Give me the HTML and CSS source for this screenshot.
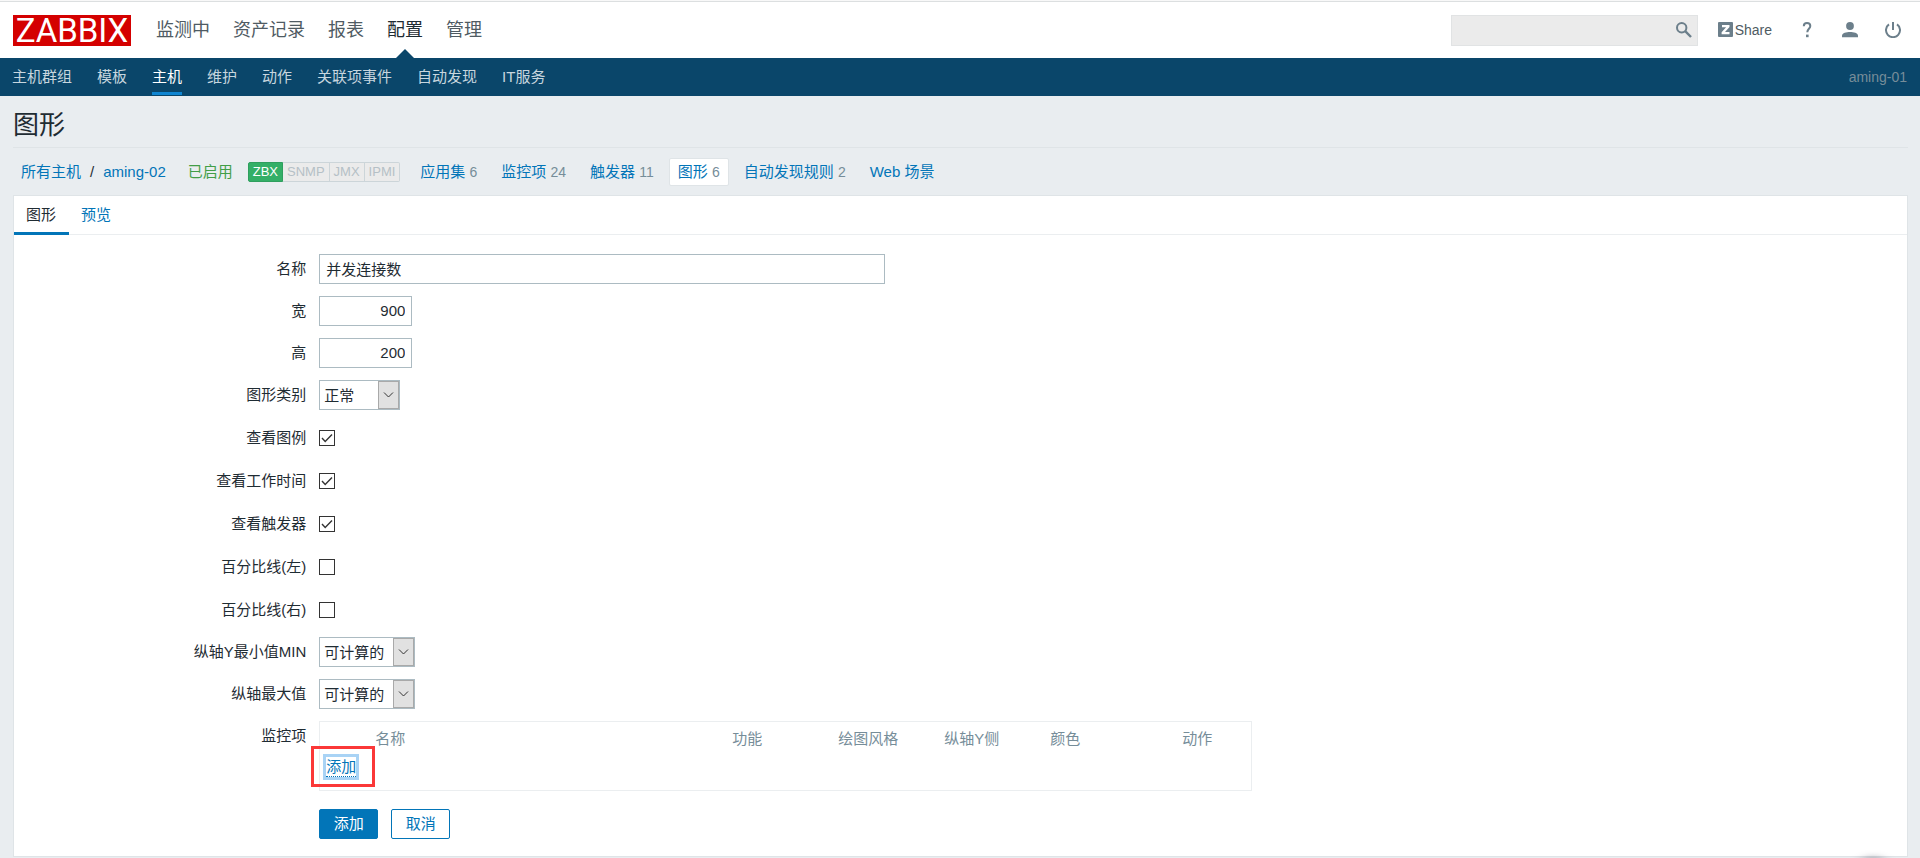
FILE: index.html
```html
<!DOCTYPE html>
<html lang="zh-CN">
<head>
<meta charset="utf-8">
<title>图形</title>
<link rel="stylesheet" href="styles.css">
</head>
<body>
<header class="header">
  <a class="logo" href="#">ZABBIX</a>
  <nav class="main-nav">
    <a href="#">监测中</a>
    <a href="#">资产记录</a>
    <a href="#">报表</a>
    <a href="#" class="selected">配置</a>
    <a href="#">管理</a>
  </nav>
  <form class="search">
    <input type="text" aria-label="搜索">
    <button type="button" aria-label="搜索">
      <svg width="16" height="16" viewBox="0 0 16 16"><circle cx="5.7" cy="5.7" r="4.7" fill="none" stroke="currentColor" stroke-width="2"/><path d="M9.2 9.2L15 15" stroke="currentColor" stroke-width="2.4"/></svg>
    </button>
  </form>
  <a class="share" href="#">
    <svg width="15" height="15" viewBox="0 0 15 15"><rect width="15" height="15" rx="1" fill="#6c7f8b"/><path d="M4 3h7.5v2L7 10h4.5v2.3H3.6v-2L8.1 5.3H4z" fill="#fff"/></svg>
    <span>Share</span>
  </a>
  <a class="icon-link" href="#" aria-label="帮助">
    <svg width="16" height="16" viewBox="0 0 16 16"><path d="M4.8 4.2C4.8 2 6.2 1 8 1s3.3 1 3.3 3c0 2.6-3 3-3 6.2" fill="none" stroke="currentColor" stroke-width="2"/><rect x="7" y="12.6" width="2.6" height="2.6" fill="currentColor"/></svg>
  </a>
  <a class="icon-link" href="#" aria-label="用户">
    <svg width="16" height="16" viewBox="0 0 16 16"><circle cx="8" cy="4" r="3.9" fill="currentColor"/><path d="M0 15.2v-1.7C0 11 4.5 10 8 10s8 1 8 3.5v1.7z" fill="currentColor"/></svg>
  </a>
  <a class="icon-link" href="#" aria-label="退出">
    <svg width="16" height="16" viewBox="0 0 16 16"><path d="M4 2.4a7 7 0 1 0 8 0M8 0v8" fill="none" stroke="currentColor" stroke-width="2"/></svg>
  </a>
</header>
<nav class="sub-nav">
  <a href="#">主机群组</a>
  <a href="#">模板</a>
  <a href="#" class="selected">主机</a>
  <a href="#">维护</a>
  <a href="#">动作</a>
  <a href="#">关联项事件</a>
  <a href="#">自动发现</a>
  <a href="#">IT服务</a>
  <span class="server">aming-01</span>
</nav>
<main class="page">
  <h1 class="title">图形</h1>
  <div class="host-bar">
    <div class="path"><a href="#">所有主机</a><span>/</span><a href="#">aming-02</a></div>
    <a class="enabled" href="#">已启用</a>
    <div class="badges">
      <span class="badge on">ZBX</span><span class="badge">SNMP</span><span class="badge">JMX</span><span class="badge">IPMI</span>
    </div>
    <nav class="host-links">
      <a href="#">应用集 <sup>6</sup></a>
      <a href="#">监控项 <sup>24</sup></a>
      <a href="#">触发器 <sup>11</sup></a>
      <a href="#" class="selected">图形 <sup>6</sup></a>
      <a href="#">自动发现规则 <sup>2</sup></a>
      <a href="#">Web 场景</a>
    </nav>
  </div>
  <section class="panel">
    <nav class="tabs">
      <a href="#" class="selected">图形</a>
      <a href="#">预览</a>
    </nav>
    <form class="form">
      <label for="name">名称</label>
      <div class="field"><input class="text wide" id="name" type="text" value="并发连接数"></div>
      <label for="width">宽</label>
      <div class="field"><input class="text number" id="width" type="text" value="900"></div>
      <label for="height">高</label>
      <div class="field"><input class="text number" id="height" type="text" value="200"></div>
      <label for="type">图形类别</label>
      <div class="field"><span class="select short"><select id="type"><option>正常</option></select><svg viewBox="0 0 21 28"><rect x=".5" y=".5" width="20" height="27" fill="#e1e1e1" stroke="#a9a9a9"/><path d="M6 11.5l4.5 4.5 4.5-4.5" fill="none" stroke="#333"/></svg></span></div>
      <label for="legend">查看图例</label>
      <div class="field tick"><span class="check"><input id="legend" type="checkbox" checked><svg viewBox="0 0 16 16"><path d="M3 8l3.2 3.5L13 4.5"/></svg></span></div>
      <label for="worktime">查看工作时间</label>
      <div class="field tick"><span class="check"><input id="worktime" type="checkbox" checked><svg viewBox="0 0 16 16"><path d="M3 8l3.2 3.5L13 4.5"/></svg></span></div>
      <label for="triggers">查看触发器</label>
      <div class="field tick"><span class="check"><input id="triggers" type="checkbox" checked><svg viewBox="0 0 16 16"><path d="M3 8l3.2 3.5L13 4.5"/></svg></span></div>
      <label for="left">百分比线(左)</label>
      <div class="field tick"><span class="check"><input id="left" type="checkbox"><svg viewBox="0 0 16 16"><path d="M3 8l3.2 3.5L13 4.5"/></svg></span></div>
      <label for="right">百分比线(右)</label>
      <div class="field tick"><span class="check"><input id="right" type="checkbox"><svg viewBox="0 0 16 16"><path d="M3 8l3.2 3.5L13 4.5"/></svg></span></div>
      <label for="ymin">纵轴Y最小值MIN</label>
      <div class="field"><span class="select"><select id="ymin"><option>可计算的</option></select><svg viewBox="0 0 21 28"><rect x=".5" y=".5" width="20" height="27" fill="#e1e1e1" stroke="#a9a9a9"/><path d="M6 11.5l4.5 4.5 4.5-4.5" fill="none" stroke="#333"/></svg></span></div>
      <label for="ymax">纵轴最大值</label>
      <div class="field"><span class="select"><select id="ymax"><option>可计算的</option></select><svg viewBox="0 0 21 28"><rect x=".5" y=".5" width="20" height="27" fill="#e1e1e1" stroke="#a9a9a9"/><path d="M6 11.5l4.5 4.5 4.5-4.5" fill="none" stroke="#333"/></svg></span></div>
      <span class="label">监控项</span>
      <div class="items">
        <table>
          <thead>
            <tr><th class="c-handle"></th><th class="c-name">名称</th><th class="c-mid">功能</th><th class="c-mid">绘图风格</th><th class="c-mid">纵轴Y侧</th><th class="c-color">颜色</th><th>动作</th></tr>
          </thead>
          <tbody>
            <tr><td colspan="7"><span class="marked"><a class="add" href="#">添加</a></span></td></tr>
          </tbody>
        </table>
      </div>
      <div class="actions">
        <button class="btn primary" type="button">添加</button>
        <button class="btn" type="button">取消</button>
      </div>
    </form>
  </section>
</main>
<div class="floating"></div>
</body>
</html>
```
FILE: styles.css
```css
* { box-sizing: border-box; }
body {
  margin: 0;
  background: #e9edf0;
  color: #1f2c33;
  font: 15px/20px "Liberation Sans", "Noto Sans CJK SC", sans-serif;
}
a { color: #0275b8; text-decoration: none; }

.header {
  display: flex;
  align-items: center;
  height: 58px;
  padding: 3px 19px 0 13px;
  background: #fff;
  box-shadow: inset 0 1px #f8f8f8, inset 0 2px #dcdfe0;
}
.logo {
  width: 118px;
  height: 31px;
  background: #d40000;
  color: #fff;
  font: 33px/31px Roboto, sans-serif;
  text-align: center;
}
.main-nav { display: flex; align-self: stretch; gap: 23px; margin-left: 25px; }
.main-nav a {
  display: flex;
  align-items: center;
  position: relative;
  padding-bottom: 2px;
  color: #4f5b63;
  font-size: 18px;
}
.main-nav .selected { color: #1f2c33; }
.main-nav .selected::after {
  content: "";
  position: absolute;
  bottom: 0;
  left: 50%;
  margin-left: -9px;
  border: 9px solid transparent;
  border-top: 0;
  border-bottom-color: #0a466a;
}
.search { display: flex; position: relative; margin-left: auto; color: #6c7f8b; }
.search input {
  width: 247px;
  height: 31px;
  padding: 0 32px 0 8px;
  border: 1px solid #e1e3e4;
  background: #ebebeb;
  font: inherit;
}
.search button {
  display: flex;
  position: absolute;
  top: 7px;
  right: 6px;
  padding: 0;
  border: 0;
  background: none;
  color: inherit;
}
.share { display: flex; align-items: center; gap: 2px; margin-left: 20px; padding-bottom: 2px; color: #4f5b63; font-size: 14px; }
.icon-link { display: flex; margin-left: 27px; padding-bottom: 2px; color: #6c7f8b; }

.sub-nav {
  display: flex;
  gap: 25px;
  height: 38px;
  padding: 0 13px 0 12px;
  background: #0a466a;
}
.sub-nav a { height: 37px; line-height: 37px; color: #c7d6df; }
.sub-nav .selected { border-bottom: 3px solid #0f85d1; color: #fff; }
.server { margin-left: auto; color: #768d99; font-size: 14px; line-height: 38px; }

.page { padding: 0 12px 1px 13px; }
.title {
  margin: 0;
  padding: 13px 0 6px;
  border-bottom: 1px solid #dfe4e7;
  font-size: 26px;
  font-weight: normal;
  line-height: 32px;
}
.host-bar { display: flex; align-items: center; height: 47px; padding-left: 8px; }
.path { display: flex; gap: 9px; }
.enabled { margin: 0 15px 0 22px; color: #429e47; }
.badges { display: flex; margin-right: 11px; }
.badge {
  padding: 0 4px;
  border: 1px solid #ccd5d9;
  border-left: 0;
  color: #b5c0c6;
  background: #ebebeb;
  font-size: 13px;
  line-height: 18px;
}
.badge:last-child { border-radius: 0 2px 2px 0; }
.badge.on { border: 1px solid #2f9f5e; border-radius: 2px 0 0 2px; background: #34af67; color: #fff; }
.host-links { display: flex; gap: 6px; }
.host-links a { padding: 3px 8px; border: 1px solid transparent; border-radius: 2px; }
.host-links .selected { border-color: #dfe4e7; background: #fff; }
.host-links sup { color: #768d99; font-size: 14px; line-height: 20px; vertical-align: baseline; }

.panel { border: 1px solid #dfe4e7; background: #fff; }
.tabs { display: flex; height: 39px; border-bottom: 1px solid #ebeef0; }
.tabs a { height: 39px; padding: 0 13px 0 12px; line-height: 37px; }
.tabs .selected { border-bottom: 3px solid #0275b8; color: #1f2c33; }

.form {
  display: grid;
  grid-template-columns: 15% 1fr;
  gap: 12px 13px;
  padding: 19px 12px 17px;
}
.form > label, .label { align-self: center; text-align: right; }
.form > .label { align-self: start; padding-top: 5px; }
.field { display: flex; align-items: center; min-height: 30px; }
.tick { min-height: 31px; }
.text {
  height: 30px;
  padding: 0 6px 2px;
  border: 1px solid #acbbc2;
  background: #fff;
  color: inherit;
  font: inherit;
}
.wide { width: 566px; }
.number { width: 93px; text-align: right; }
.select { position: relative; }
.select select {
  display: block;
  width: 96px;
  height: 30px;
  padding: 2px 24px 0 4px;
  border: 1px solid #acbbc2;
  border-radius: 0;
  appearance: none;
  background: #fff;
  color: inherit;
  font: inherit;
}
.short select { width: 81px; }
.select svg { position: absolute; top: 1px; right: 1px; width: 21px; height: 28px; pointer-events: none; }
.check { display: grid; }
.check > * { grid-area: 1 / 1; width: 16px; height: 16px; }
.check input { margin: 0; border: 1px solid #333; appearance: none; background: #fff; }
.check svg { visibility: hidden; fill: none; stroke: #333; stroke-width: 1.4; pointer-events: none; }
.check input:checked + svg { visibility: visible; }

.items { justify-self: start; padding-bottom: 10px; border: 1px solid #ebeef0; }
.items table { width: 931px; border-collapse: collapse; table-layout: fixed; }
.items th { padding: 7px 5px 5px; color: #768d99; font-weight: normal; text-align: left; }
.items td { padding: 3px 6px; }
.c-handle { width: 50px; }
.c-name { width: 357px; }
.c-mid { width: 106px; }
.c-color { width: 132px; }
.add { display: block; border-bottom: 1px dotted #0275b8; box-shadow: 0 0 0 3px #a9d3f5; line-height: 19px; }
.marked { display: block; position: relative; width: 30px; }
.marked::after {
  content: "";
  position: absolute;
  inset: -11px -19px -10px -15px;
  border: 3px solid #fb3838;
  pointer-events: none;
}
.actions { display: flex; grid-column: 2; gap: 13px; padding-top: 6px; }
.btn {
  min-width: 59px;
  height: 30px;
  padding: 0 13px;
  border: 1px solid #0275b8;
  border-radius: 2px;
  background: #fff;
  color: #0275b8;
  font: inherit;
}
.primary { background: #0275b8; color: #fff; }

.floating {
  position: fixed;
  right: 22px;
  bottom: -52px;
  width: 50px;
  height: 50px;
  border-radius: 50%;
  background: #fff;
  box-shadow: 0 0 8px #556;
}
```
